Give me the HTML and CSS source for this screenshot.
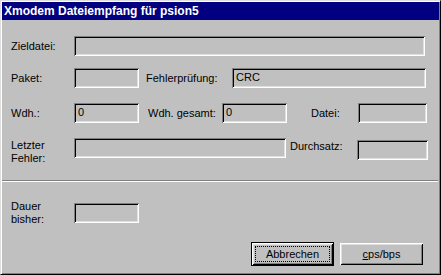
FILE: index.html
```html
<!DOCTYPE html>
<html lang="de">
<head>
    <meta charset="UTF-8">
    <title>Xmodem Dateiempfang</title>
    <link rel="stylesheet" href="styles.css">
</head>
<body>
    <div class="window">
        <div class="titlebar">Xmodem Dateiempfang für psion5</div>
        <div class="content">
            <div class="row row-ziel">
                <span class="lbl lbl-first">Zieldatei:</span>
                <div class="field f-ziel"></div>
            </div>
            <div class="row row-paket">
                <span class="lbl lbl-first">Paket:</span>
                <div class="field f-small"></div>
                <span class="lbl lbl-fehlerpr">Fehlerprüfung:</span>
                <div class="field f-crc">CRC</div>
            </div>
            <div class="row row-wdh">
                <span class="lbl lbl-first">Wdh.:</span>
                <div class="field f-small">0</div>
                <span class="lbl lbl-gesamt">Wdh. gesamt:</span>
                <div class="field f-small">0</div>
                <span class="lbl lbl-datei">Datei:</span>
                <div class="field f-datei"></div>
            </div>
            <div class="row row-fehler">
                <span class="lbl lbl-first lbl-two">Letzter<br>Fehler:</span>
                <div class="field f-fehler"></div>
                <span class="lbl lbl-durch">Durchsatz:</span>
                <div class="field f-durch"></div>
            </div>
            <div class="separator"></div>
            <div class="row row-dauer">
                <span class="lbl lbl-first lbl-two">Dauer<br>bisher:</span>
                <div class="field f-small"></div>
            </div>
            <div class="buttons">
                <button class="btn btn-default"><span class="focus">Abbrechen</span></button>
                <button class="btn btn-plain"><u>c</u>ps/bps</button>
            </div>
        </div>
    </div>
</body>
</html>
```

FILE: styles.css
```css
body {
    margin: 0;
    background: #c0c0c0;
    font-family: "Liberation Sans", Arial, sans-serif;
    font-size: 11px;
    color: #000;
}
.window {
    box-sizing: border-box;
    width: 441px;
    height: 275px;
    padding: 1px;
    background: #c0c0c0;
    border-top: 1px solid #dfdfdf;
    border-left: 1px solid #dfdfdf;
    border-right: 1px solid #000;
    border-bottom: 1px solid #000;
    box-shadow: inset 1px 1px #fff, inset -1px -1px #808080;
}
.titlebar {
    height: 18px;
    background: #000080;
    color: #fff;
    font-weight: bold;
    font-size: 12px;
    line-height: 18px;
    padding-left: 2px;
    white-space: nowrap;
}
.content {
    padding: 16px 0 0 9px;
}
.row {
    display: flex;
    align-items: center;
}
.lbl {
    white-space: nowrap;
    line-height: 13px;
}
.lbl-first {
    width: 63px;
    flex: none;
}
.field {
    box-sizing: border-box;
    flex: none;
    height: 20px;
    padding: 2px 0 0 4px;
    line-height: 15px;
    background: #c0c0c0;
    box-shadow: inset 1px 1px #808080, inset -1px -1px #fff, inset 2px 2px #000, inset -2px -2px #dfdfdf;
}
.f-ziel { width: 351px; }
.f-small { width: 65px; }
.f-crc { width: 194px; }
.f-datei { width: 69px; }
.f-fehler { width: 212px; }
.f-durch { width: 71px; margin-top: 2px; }

.lbl-fehlerpr { margin-left: 7px; width: 86px; }
.lbl-gesamt { margin-left: 9px; width: 74px; }
.lbl-datei { margin-left: 24px; width: 47px; }
.lbl-durch { margin-left: 4px; width: 67px; margin-top: 2px; }

.row-paket { margin-top: 12px; }
.row-wdh { margin-top: 15px; }
.row-fehler { margin-top: 15px; align-items: flex-start; }
.row-fehler .lbl-two { padding-top: 1px; }
.separator {
    margin: 15px 1px 0 -9px;
    border-top: 1px solid #808080;
    border-bottom: 1px solid #fff;
}
.row-dauer { margin-top: 18px; }
.buttons {
    display: flex;
    justify-content: flex-end;
    gap: 6px;
    margin-top: 16px;
    padding-right: 16px;
}
.btn {
    box-sizing: border-box;
    border: none;
    background: #c0c0c0;
    font-family: "Liberation Sans", Arial, sans-serif;
    font-size: 11px;
    color: #000;
    padding: 0;
    width: 83px;
    height: 24px;
}
.btn-default {
    box-shadow: inset 1px 1px #000, inset -1px -1px #000, inset 2px 2px #fff, inset -2px -2px #000, inset 3px 3px #dfdfdf, inset -3px -3px #808080;
}
.btn-plain {
    width: 83px;
    height: 22px;
    margin: 1px 0;
    box-shadow: inset 1px 1px #fff, inset -1px -1px #000, inset 2px 2px #dfdfdf, inset -2px -2px #808080;
}
.focus {
    display: block;
    margin: 0 4px;
    height: 16px;
    line-height: 14px;
    border: 1px dotted #000;
    box-sizing: border-box;
}
```
